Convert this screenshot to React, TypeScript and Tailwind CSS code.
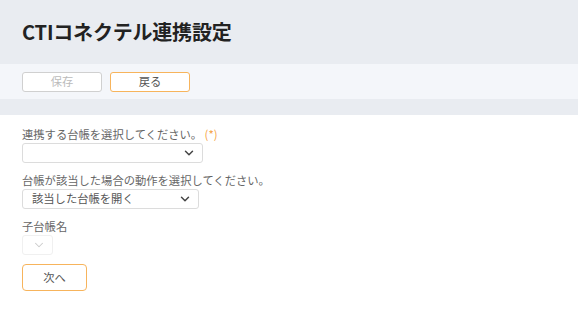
import { ChevronDown } from "lucide-react";

const font = { fontFamily: '"Noto Sans CJK JP", "Noto Sans", sans-serif' };

function Select({ value, width, disabled }: { value?: string; width: string; disabled?: boolean }) {
  return (
    <div
      className={`${width} h-5 flex items-center justify-between rounded-[3px] border bg-white pl-[9px] pr-[6px] ${
        disabled ? "border-[#f0f0f0]" : "border-[#dcdcdc]"
      }`}
    >
      <span className="text-[11.3px] leading-none text-[#555]">{value}</span>
      <ChevronDown className={`w-[14px] h-[14px] ${disabled ? "text-[#ccc]" : "text-[#444]"}`} strokeWidth={disabled ? 1.8 : 2.5} />
    </div>
  );
}

export default function App() {
  return (
    <div className="w-[578px] h-[314px] bg-white overflow-hidden" style={font}>
      <div className="h-16 bg-[#e9ecf1] flex items-center px-[22px]">
        <h1 className="text-[20px] font-bold text-[#222] tracking-[-0.2px]">CTIコネクテル連携設定</h1>
      </div>
      <div className="h-[35px] bg-[#f4f6fa] flex items-center gap-2 px-[22px]">
        <button className="w-20 h-5 rounded-[3px] border border-[#d0d0d0] bg-white text-[11.3px] text-[#bbb]">保存</button>
        <button className="w-20 h-5 rounded-[3px] border border-[#f7b45c] bg-white text-[11.3px] text-[#555]">戻る</button>
      </div>
      <div className="h-4 bg-[#e9ecf1]" />
      <div className="px-[22px] pt-[10px] flex flex-col text-[#666]">
        <div className="text-[11.3px] leading-[18px]">
          連携する台帳を選択してください。 <span className="text-[#f5a445]">(*)</span>
        </div>
        <Select width="w-[181px]" />
        <div className="text-[11.3px] leading-[18px] mt-[8px]">台帳が該当した場合の動作を選択してください。</div>
        <Select width="w-[177px]" value="該当した台帳を開く" />
        <div className="text-[11.3px] leading-[18px] mt-[8px]">子台帳名</div>
        <Select width="w-[31px]" disabled />
        <button className="mt-[9px] w-[65px] h-[27px] rounded-[4px] border border-[#f7b45c] bg-white text-[11.3px] text-[#555]">次へ</button>
      </div>
    </div>
  );
}
